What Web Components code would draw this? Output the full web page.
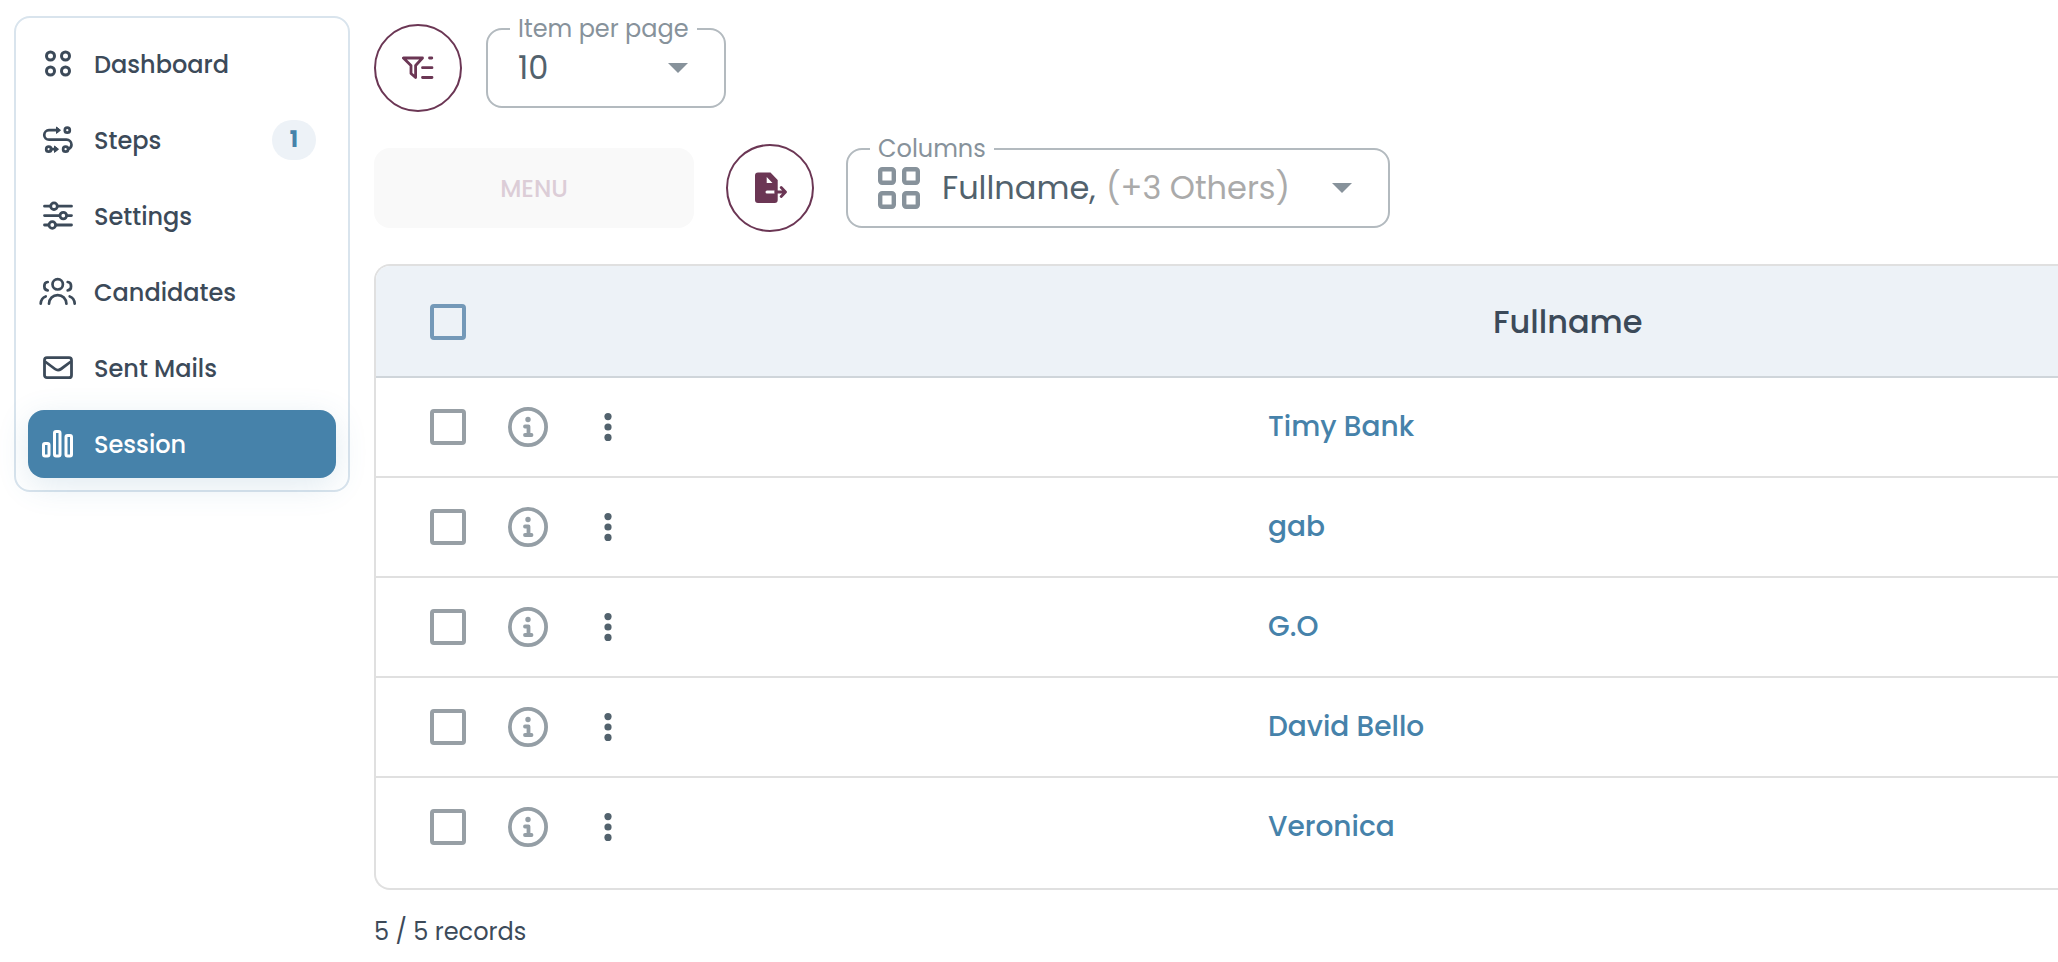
<!DOCTYPE html>
<html lang="en">
<head>
<meta charset="utf-8">
<title>Session</title>
<style>
:root {
  --font: Poppins, Inter, sans-serif;
  --ink: #3c4a59;
  --text: #52626d;
  --muted: #87929b;
  --line: #e0e0e0;
  --blue: #4682aa;
  --pale: #edf2f7;
  --plum: #6b3654;
}
body {
  margin: 0;
  background: #fff;
  font-family: var(--font);
  color: var(--ink);
}
</style>
</head>
<body>
<session-page></session-page>

<script>
const ICONS = {
  dashboard: `<g fill="none" stroke="currentColor" stroke-width="3"><circle cx="8.5" cy="8" r="4"/><circle cx="23.5" cy="8" r="4"/><circle cx="8.5" cy="23" r="4"/><circle cx="23.5" cy="23" r="4"/></g>`,
  steps: `<g fill="none" stroke="currentColor" stroke-width="2.7" stroke-linecap="round" stroke-linejoin="round"><path d="M16 6.200H7a4.700 4.700 0 0 0 0 9.500h17.500a5 5 0 0 1 5 5c0 2-1.200 3.500-3 4.300"/><path d="M9 25.200h5"/><circle cx="25.300" cy="6.200" r="2.500"/><circle cx="6.700" cy="25.200" r="2.500"/><circle cx="23.600" cy="25.200" r="2.500"/></g><path fill="currentColor" stroke="currentColor" stroke-linejoin="round" d="M14.500 3l4 3.200-4 3.200zM12.500 22l4 3.200-4 3.200z"/>`,
  settings: `<g fill="none" stroke="currentColor" stroke-width="2.8" stroke-linecap="round"><path d="M2.500 6.200H8M16 6.200h13.500M2.500 15.600H17M25 15.600h4.500M2.500 25H6M14 25h15.500"/><circle cx="12" cy="6.200" r="3.300"/><circle cx="21.300" cy="15.600" r="3.300"/><circle cx="10.300" cy="25" r="3.300"/></g>`,
  candidates: `<g fill="none" stroke="currentColor" stroke-width="2.7" stroke-linecap="round"><circle cx="19.700" cy="8.300" r="5.200"/><path d="M11 27.700c.2-5 3.800-8.600 8.700-8.600s8.500 3.600 8.700 8.600M9.700 6c-4.500.4-4.500 8 0 8.400M29.700 6c4.500.4 4.500 8 0 8.400M2.700 27.700c.3-3.700 2.300-6.400 5-7.200M36.700 27.700c-.3-3.700-2.300-6.400-5-7.200"/></g>`,
  mail: `<g fill="none" stroke="currentColor" stroke-width="2.8" stroke-linejoin="round"><rect x="2.500" y="5.700" width="27" height="20" rx="2.500"/><path d="M3 9.500l10 7.500q3 2.200 6 0L29 9.500"/></g>`,
  session: `<g fill="none" stroke="currentColor" stroke-width="3"><rect x="1.500" y="15.500" width="5.500" height="12.500" rx="1.500"/><rect x="12.500" y="3.500" width="5.500" height="24.500" rx="1.500"/><rect x="24" y="7.500" width="5.500" height="20.500" rx="1.500"/></g>`,
  filter: `<g fill="none" stroke="currentColor" stroke-width="2.8" stroke-linecap="round" stroke-linejoin="round"><path d="M1.400 6H20.500L13.600 13.500V25.500L9 21.500V13.500ZM27.500 6h2.300M20.500 15.700h9.500M20.500 25.500h9.500"/></g>`,
  exporting: `<path fill="currentColor" fill-rule="evenodd" d="M5 .5h12.500L24.700 8v20a3 3 0 0 1-3 3H5a3 3 0 0 1-3-3v-24.500a3 3 0 0 1 3-3zM13.700 5v6h5.800zM14 18.500a1.500 1.500 0 0 0 0 3h7.500v-3z"/><path fill="none" stroke="currentColor" stroke-width="2.8" stroke-linecap="round" stroke-linejoin="round" d="M23 20h9M28.200 15.500l4.300 4.500-4.300 4.500"/>`,
  grid: `<g fill="none" stroke="currentColor" stroke-width="4.4"><rect x="2.200" y="2.200" width="13.600" height="13.600" rx="2"/><rect x="26.200" y="2.200" width="13.600" height="13.600" rx="2"/><rect x="2.200" y="26.200" width="13.600" height="13.600" rx="2"/><rect x="26.200" y="26.200" width="13.600" height="13.600" rx="2"/></g>`,
  info: `<circle cx="20" cy="20" r="18.100" fill="none" stroke="currentColor" stroke-width="3.800"/><circle cx="20" cy="12.500" r="2.700" fill="currentColor"/><path fill="none" stroke="currentColor" stroke-width="3.800" stroke-linecap="round" stroke-linejoin="round" d="M17 19.500h3.500V28M17 28h6.500"/>`,
  dots: `<g fill="currentColor"><circle cx="14" cy="3.600" r="3.600"/><circle cx="14" cy="14" r="3.600"/><circle cx="14" cy="24.400" r="3.600"/></g>`,
  caret: `<path fill="currentColor" d="M0 0h20L10 10z"/>`
};

function icon(name, width, height) {
  return `<svg width="${width}" height="${height}" viewBox="0 0 ${width} ${height}" aria-hidden="true">${ICONS[name]}</svg>`;
}

// Base class: every component renders its template once into an open shadow root
class BaseElement extends HTMLElement {
  connectedCallback() {
    if (this.shadowRoot) return;
    const template = document.createElement("template");
    template.innerHTML = this.template();
    this.attachShadow({ mode: "open" }).appendChild(template.content.cloneNode(true));
  }
}

class NavItem extends BaseElement {
  template() {
    const name = this.getAttribute("icon");
    const badge = this.getAttribute("badge");
    const width = name === "candidates" ? 40 : 32;
    return `
<style>
:host { display: block; }
a {
  display: flex;
  align-items: center;
  height: 68px;
  padding: 0 20px 0 10px;
  border-radius: 16px;
  color: var(--ink);
  font-size: 24px;
  font-weight: 500;
  text-decoration: none;
}
.icon {
  display: flex;
  justify-content: center;
  width: 40px;
  margin-right: 16px;
}
svg { flex: none; }
.label { flex: 1; }
.badge {
  width: 44px;
  border-radius: 20px;
  background: var(--pale);
  color: var(--blue);
  font-size: 22px;
  font-weight: 700;
  line-height: 40px;
  text-align: center;
}
:host([active]) a {
  background: var(--blue);
  color: #fff;
  box-shadow: 0 8px 32px rgba(70, 130, 170, 0.16);
}
</style>
<a href="#${name}"${this.hasAttribute("active") ? ' aria-current="page"' : ""}>
  <span class="icon">${icon(name, width, 32)}</span>
  <span class="label"><slot></slot></span>
  ${badge ? `<span class="badge">${badge}</span>` : ""}
</a>`;
  }
}
customElements.define("nav-item", NavItem);

class SideNav extends BaseElement {
  template() {
    return `
<style>
:host { display: block; }
nav {
  display: grid;
  gap: 8px;
  padding: 12px;
  border: 2px solid #d9e4ed;
  border-radius: 16px;
}
</style>
<nav aria-label="Main"><slot></slot></nav>`;
  }
}
customElements.define("side-nav", SideNav);

class RoundButton extends BaseElement {
  template() {
    const name = this.getAttribute("icon");
    return `
<style>
:host { display: block; }
button {
  display: grid;
  place-items: center;
  width: 88px;
  height: 88px;
  padding: 0;
  border: 2px solid var(--plum);
  border-radius: 50%;
  background: none;
  color: var(--plum);
}
</style>
<button type="button" aria-label="${this.getAttribute("label")}">${icon(name, name === "exporting" ? 34 : 32, 32)}</button>`;
  }
}
customElements.define("round-button", RoundButton);

class OutlinedSelect extends BaseElement {
  template() {
    return `
<style>
:host { display: block; }
fieldset {
  display: block;
  box-sizing: border-box;
  height: 92px;
  min-width: 0;
  margin: 0;
  padding: 0 36px 0 30px;
  border: 2px solid #b3babf;
  border-radius: 16px;
  color: var(--muted);
}
legend {
  height: 26px;
  margin-left: -8px;
  padding: 0 8px;
  font-size: 24px;
  line-height: 26px;
  white-space: nowrap;
}
.row {
  display: flex;
  align-items: center;
  height: 52px;
}
::slotted(svg) { margin-right: 22px; }
select {
  appearance: none;
  padding: 0;
  border: 0;
  background: none;
  color: var(--text);
  font: 32px/40px var(--font);
}
.more {
  margin-left: 10px;
  color: #aaa;
  font-size: 32px;
  line-height: 40px;
}
.caret { margin-left: auto; }
</style>
<fieldset>
  <legend><label for="field">${this.getAttribute("label")}</label></legend>
  <div class="row">
    <slot name="icon"></slot>
    <select id="field"><option>${this.getAttribute("value")}</option></select>
    ${this.hasAttribute("more") ? `<span class="more">${this.getAttribute("more")}</span>` : ""}
    <svg class="caret" width="20" height="10" viewBox="0 0 20 10" aria-hidden="true">${ICONS.caret}</svg>
  </div>
</fieldset>`;
  }
}
customElements.define("outlined-select", OutlinedSelect);

class RecordTable extends BaseElement {
  template() {
    const rows = this.getAttribute("names").split(",").map(name => `
<tr>
  <td class="actions"><div class="tools">
    <input type="checkbox" aria-label="Select ${name}">
    <button type="button" aria-label="Details of ${name}">${icon("info", 40, 40)}</button>
    <button type="button" class="menu" aria-label="Actions for ${name}">${icon("dots", 28, 28)}</button>
  </div></td>
  <td><a href="#record">${name}</a></td>
</tr>`).join("");
    return `
<style>
:host {
  display: block;
  overflow: hidden;
  border: 2px solid var(--line);
  border-right: 0;
  border-radius: 16px 0 0 16px;
  padding-bottom: 10px;
}
table {
  width: 100%;
  border-collapse: separate;
  border-spacing: 0;
  table-layout: fixed;
}
th, td {
  box-sizing: border-box;
  height: 100px;
  padding: 0;
  border-bottom: 2px solid var(--line);
  text-align: left;
}
th {
  height: 112px;
  padding-top: 2px;
  background: var(--pale);
  border-bottom-color: #cfd5da;
  font-size: 32px;
  font-weight: 500;
}
tr:last-child td { border-bottom-color: transparent; }
.actions { width: 892px; }
th:last-child { padding-left: 225px; }
.tools {
  display: flex;
  align-items: center;
  gap: 42px;
  padding-left: 54px;
}
input {
  appearance: none;
  box-sizing: border-box;
  width: 36px;
  height: 36px;
  margin: 0;
  border: 4px solid #979fa5;
  border-radius: 4px;
}
th input { border-color: #7499b8; }
button {
  display: flex;
  padding: 0;
  border: 0;
  background: none;
  color: #949ea5;
}
.menu {
  margin-left: 4px;
  color: var(--text);
}
a {
  color: var(--blue);
  font-size: 28px;
  font-weight: 500;
  text-decoration: none;
}
</style>
<table>
  <thead><tr>
    <th class="actions"><div class="tools"><input type="checkbox" aria-label="Select all"></div></th>
    <th>Fullname</th>
  </tr></thead>
  <tbody>${rows}</tbody>
</table>`;
  }
}
customElements.define("record-table", RecordTable);

class SessionPage extends BaseElement {
  template() {
    return `
<style>
:host {
  display: grid;
  grid-template-columns: 336px minmax(0, 1fr);
  align-items: start;
  gap: 24px;
  padding: 16px 0 0 14px;
}
.bar {
  display: flex;
  align-items: center;
  gap: 24px;
}
.filters { padding-top: 8px; }
.actions {
  gap: 32px;
  margin: 32px 0;
}
.bar outlined-select {
  width: 240px;
  margin-top: -12px;
}
.actions outlined-select { width: 544px; }
.disabled {
  width: 320px;
  height: 80px;
  border: 0;
  border-radius: 16px;
  background: #f9f9f9;
  color: #dccdd7;
  font: 500 24px var(--font);
}
.grid-icon { color: var(--muted); }
p {
  margin: 24px 0 0;
  font-size: 24px;
  line-height: 36px;
}
</style>
<side-nav>
  <nav-item icon="dashboard">Dashboard</nav-item>
  <nav-item icon="steps" badge="1">Steps</nav-item>
  <nav-item icon="settings">Settings</nav-item>
  <nav-item icon="candidates">Candidates</nav-item>
  <nav-item icon="mail">Sent Mails</nav-item>
  <nav-item icon="session" active>Session</nav-item>
</side-nav>
<main>
  <div class="bar filters">
    <round-button icon="filter" label="Filter"></round-button>
    <outlined-select label="Item per page" value="10"></outlined-select>
  </div>
  <div class="bar actions">
    <button class="disabled" type="button" disabled>MENU</button>
    <round-button icon="exporting" label="Export"></round-button>
    <outlined-select label="Columns" value="Fullname," more="(+3 Others)">
      <svg slot="icon" class="grid-icon" width="42" height="42" viewBox="0 0 42 42" aria-hidden="true">${ICONS.grid}</svg>
    </outlined-select>
  </div>
  <record-table names="Timy Bank,gab,G.O,David Bello,Veronica"></record-table>
  <p>5 / 5 records</p>
</main>`;
  }
}
customElements.define("session-page", SessionPage);
</script>
</body>
</html>
